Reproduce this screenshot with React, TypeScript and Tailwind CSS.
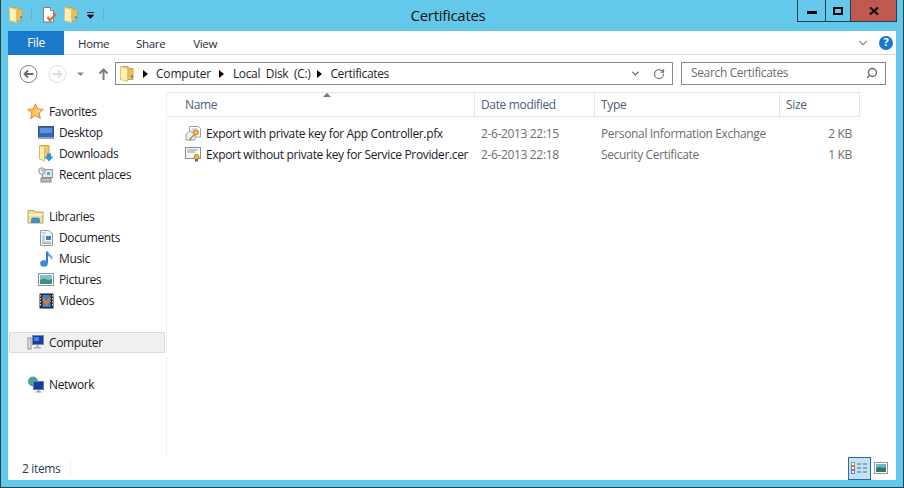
import React from 'react';
import { ChevronDown, RotateCw, Search } from 'lucide-react';

const FolderIcon = () => (
  <svg width="14" height="16" viewBox="0 0 14 16">
    <path d="M1 .5h7l1 2h4v11H1z" fill="#f0c65a" stroke="#c9a44a" />
    <path d="M.5 .5 7.500 2.500v13l-7-2z" fill="#fdf0b8" stroke="#e2c46c" />
    <path d="M8 3h3v9H8z" fill="#e9bb50" />
    <rect x="11" y="9" width="2" height="3" fill="#4a9bd8" />
  </svg>
);

const PageCheckIcon = () => (
  <svg width="16" height="16" viewBox="0 0 16 16">
    <path d="M1.500.500h7l3 3V15h-10z" fill="#fff" stroke="#7f7f7f" />
    <path d="M8.500.500v3h3" fill="#e6e6e6" stroke="#7f7f7f" />
    <path d="M5.500 10 8 13.500l6-7" fill="none" stroke="#e4673f" strokeWidth="2.200" />
  </svg>
);

const StarIcon = () => (
  <svg width="17" height="17" viewBox="0 0 17 17">
    <path d="M8.500 .8l2.300 5.100 5.500.5-4.200 3.600 1.300 5.600-4.900-3-4.900 3 1.300-5.600L.7 6.400l5.500-.5z" fill="#fbc15e" stroke="#e58a2c" />
    <path d="M8.500 3.500l1.500 3.500 3.500.4-3 2.300z" fill="#fde3a0" />
  </svg>
);

const DesktopIcon = () => (
  <svg width="16" height="14" viewBox="0 0 16 14">
    <rect x=".5" y=".5" width="15" height="11" fill="#2f68c4" stroke="#44546a" />
    <path d="M2 2h12v5H2z" fill="#5c93df" />
    <rect x="0" y="11" width="16" height="2" fill="#8fa0b4" />
  </svg>
);

const DownloadsIcon = () => (
  <svg width="15" height="17" viewBox="0 0 15 17">
    <path d="M1 .5h9v13H1z" fill="#f0c868" stroke="#c9a44a" />
    <path d="M.5 .5 5.500 2v14l-5-2z" fill="#fbeeb4" stroke="#d9b95f" />
    <path d="M8 8.500h4v3h2.500L10 16.500 5.500 11.500H8z" fill="#2f8fe0" />
  </svg>
);

const RecentIcon = () => (
  <svg width="16" height="16" viewBox="0 0 16 16">
    <rect x="4.500" y="2.500" width="10" height="8" fill="#dfe6ec" stroke="#8b98a3" />
    <rect x="9" y="5" width="3" height="3" fill="#64a6d8" />
    <circle cx="4" cy="4" r="3.200" fill="#f5f5f5" stroke="#8a8a8a" />
    <path d="M4 2v2h2" fill="none" stroke="#666" strokeWidth=".8" />
    <rect x="3" y="11" width="10" height="4" fill="#b6bec6" stroke="#7d8790" />
  </svg>
);

const LibrariesIcon = () => (
  <svg width="17" height="15" viewBox="0 0 17 15">
    <path d="M1 1.500h6l1 1.500h8v11H1z" fill="#f5de9a" stroke="#bda25a" />
    <path d="M1.500 5h14v1.500h-14z" fill="#fff7d8" />
    <path d="M4 14v-3q0-2.500 2-2.500h5q2 0 2 2.500v3z" fill="#3f8fc9" />
  </svg>
);

const DocumentsIcon = () => (
  <svg width="13" height="16" viewBox="0 0 13 16">
    <path d="M.5 .5h8l4 3v12h-12z" fill="#f8f9fb" stroke="#8d97a3" />
    <path d="M2 3h4M2 12h9M2 13.500h9" stroke="#9aa5b1" />
    <rect x="6" y="6" width="5" height="4" fill="#4a80b8" />
    <path d="M2 6h3M2 8h3M2 10h3" stroke="#9aa5b1" />
  </svg>
);

const MusicIcon = () => (
  <svg width="13" height="16" viewBox="0 0 13 16">
    <path d="M7 .5v11.500" stroke="#2f7fce" strokeWidth="2" />
    <ellipse cx="4" cy="12.500" rx="3.800" ry="3.200" fill="#3a8bd8" />
    <path d="M8 .5q1 3 4 4.500 1 2.500-.5 4.500.5-3-3.500-4.500z" fill="#5aa7e8" />
  </svg>
);

const PicturesIcon = () => (
  <svg width="16" height="14" viewBox="0 0 16 14">
    <rect x=".5" y=".5" width="15" height="12" fill="#fff" stroke="#8995a0" />
    <rect x="2" y="2" width="12" height="5" fill="#7cc0dc" />
    <path d="M2 7l4-1.500 4 1.500 4-1v5H2z" fill="#3f8f72" />
  </svg>
);

const VideosIcon = () => (
  <svg width="15" height="16" viewBox="0 0 15 16">
    <rect x=".5" y=".5" width="14" height="15" fill="#232b33" />
    <rect x="3.500" y="2" width="8" height="12" fill="#3f83c4" />
    <path d="M3.500 4 7.500 7l4-3v4l-4 5-4-5z" fill="#c87a50" />
    <path d="M1.500 2v12M13.500 2v12" stroke="#d8dde2" strokeDasharray="1.500 1.500" />
  </svg>
);

const ComputerIcon = () => (
  <svg width="17" height="15" viewBox="0 0 17 15">
    <rect x="1" y="3" width="3" height="11" fill="#e6e8e6" stroke="#8a9088" />
    <rect x="5.500" y=".5" width="11" height="9" fill="#123fa8" stroke="#7f8a96" />
    <path d="M7 2h5v4H7z" fill="#3a86e0" />
    <path d="M9.500 10h2v2h2.500v1.500H7V12h2.500z" fill="#a7afb8" />
  </svg>
);

const NetworkIcon = () => (
  <svg width="17" height="17" viewBox="0 0 17 17">
    <circle cx="6" cy="5.500" r="5" fill="#3fa0d8" />
    <path d="M3 2.500q3-.5 3 2T2 8zM7 1.500l3 2-2 2z" fill="#4fb04a" />
    <rect x="6.500" y="5.500" width="10" height="8" fill="#123fa8" stroke="#6f7b88" />
    <path d="M10.500 14h2v1.500h2v1h-6v-1h2z" fill="#8f99a3" />
  </svg>
);

const PfxIcon = () => (
  <svg width="17" height="17" viewBox="0 0 17 17">
    <path d="M4.500 1.500h9l2 2V12h-11z" fill="#fff" stroke="#98a3ad" />
    <path d="M6.500 4h6M6.500 6h3" stroke="#aab4bd" />
    <path d="M1 9l4-3 5 3v6H1z" fill="#eef1f4" stroke="#98a3ad" />
    <circle cx="11" cy="7.500" r="2.500" fill="#f3c04e" stroke="#b7862a" />
    <path d="M9.500 9.500 4.500 14.500l1.500 1" fill="none" stroke="#c9952f" strokeWidth="1.500" />
  </svg>
);

const CerIcon = () => (
  <svg width="17" height="17" viewBox="0 0 17 17">
    <rect x=".5" y="1.500" width="15" height="11" fill="#fbf8ea" stroke="#85909a" />
    <path d="M2.500 4h10M2.500 6h7" stroke="#6f9fc8" />
    <circle cx="11.500" cy="11" r="2.500" fill="#eeb93d" stroke="#b98a25" />
    <path d="M10 13v3l1.500-1 1.500 1v-3" fill="#2a6ec4" />
  </svg>
);

const Arrow = ({ className }: { className: string }) => (
  <span className={`h-0 w-0 border-y-[4px] border-l-[5px] border-y-transparent border-l-black ${className}`} />
);

const NavItem = ({ icon, label, child, selected }: { icon: React.ReactNode; label: string; child?: boolean; selected?: boolean }) => (
  <div className={`flex h-[21px] items-center border ${selected ? 'border-[#dcdcdc] bg-[#f0f0f0]' : 'border-transparent'}`}>
    <span className={`flex w-5 items-center justify-center ${child ? 'ml-[26px]' : 'ml-[15px]'}`}>{icon}</span>
    <span className={`${child ? 'ml-[3px]' : 'ml-[4px]'} text-[#1a1a2a]`}>{label}</span>
  </div>
);

const files = [
  { icon: <PfxIcon />, name: 'Export with private key for App Controller.pfx', date: '2-6-2013 22:15', type: 'Personal Information Exchange', size: '2 KB' },
  { icon: <CerIcon />, name: 'Export without private key for Service Provider.cer', date: '2-6-2013 22:18', type: 'Security Certificate', size: '1 KB' },
];

export default function App() {
  return (
    <div className="relative flex h-[488px] w-[904px] flex-col overflow-hidden border-x border-b border-[#2c3e48] bg-[#63c8ea] px-[7px] pb-[7px] font-['Open_Sans',sans-serif] text-[12px] tracking-[-0.35px] text-[#1e1e1e]">
      {/* Title bar */}
      <div className="flex h-[31px] shrink-0 items-start">
        <div className="flex items-center pt-[7px]">
          <span className="ml-px"><FolderIcon /></span>
          <span className="ml-[8px] mr-[10px] h-[12px] w-px bg-[#7fa6b6]" />
          <PageCheckIcon />
          <span className="ml-[6px]"><FolderIcon /></span>
          <svg className="ml-[8px]" width="9" height="9" viewBox="0 0 9 9">
            <path d="M1 1.500h7M1.500 4h6L4.500 7.500z" fill="#000" stroke="#000" strokeWidth=".8" />
          </svg>
          <span className="ml-[8px] h-[12px] w-px bg-[#7fa6b6]" />
        </div>
        <div className="flex-1 pt-[4px] pr-[5px] text-center text-[15px] tracking-[-0.3px] text-[#111]">Certificates</div>
        <div className="mr-[-1px] flex h-[22px] border border-t-0 border-[#1f3d4c]">
          <div className="flex w-[28px] items-center justify-center border-r border-[#1f3d4c]">
            <span className="mt-[3px] h-[3px] w-[10px] bg-black" />
          </div>
          <div className="flex w-[25px] items-center justify-center border-r border-[#1f3d4c]">
            <span className="h-[8px] w-[10px] border-2 border-black" />
          </div>
          <div className="flex w-[45px] items-center justify-center bg-[#c05a50]">
            <svg width="10" height="8" viewBox="0 0 10 8">
              <path d="M1 .5 9 7.500M9 .5 1 7.500" stroke="#000" strokeWidth="2" />
            </svg>
          </div>
        </div>
      </div>

      <div className="flex min-h-0 flex-1 flex-col bg-white">
        {/* Ribbon tabs */}
        <div className="flex h-[24px] shrink-0 items-center border-b border-[#dadbdc]">
          <div className="flex h-[24px] w-[56px] items-center justify-center bg-[#1979ca] text-white">File</div>
          <span className="ml-[14px] pt-[2px] text-[11.5px] text-[#2a2a3a]">Home</span>
          <span className="ml-[27px] pt-[2px] text-[11.5px] text-[#2a2a3a]">Share</span>
          <span className="ml-[28px] pt-[2px] text-[11.5px] text-[#2a2a3a]">View</span>
          <ChevronDown className="ml-auto text-[#8a8f96]" size={14} strokeWidth={2} />
          <span className="ml-[9px] mr-[3px] flex h-[14px] w-[14px] items-center justify-center rounded-full bg-[#1979ca] text-[11px] font-bold text-white">?</span>
        </div>

        {/* Address row */}
        <div className="flex h-[37px] shrink-0 items-center pl-[11px]">
          <svg width="92" height="20" viewBox="0 0 92 20" className="mr-[4px]">
            <circle cx="9.500" cy="10" r="8.500" fill="#fff" stroke="#7a7a7a" />
            <path d="M14.500 10h-9M9 6.500 5.500 10 9 13.500" fill="none" stroke="#6a6a6a" strokeWidth="1.800" />
            <circle cx="38.500" cy="10" r="8.500" fill="#fff" stroke="#dedede" />
            <path d="M33.500 10h9M39 6.500 42.500 10 39 13.500" fill="none" stroke="#dedede" strokeWidth="1.800" />
            <path d="M58 8.500h7l-3.500 3.500z" fill="#8a8a8a" />
            <path d="M84.500 16V6M80.500 9.500l4-4 4 4" fill="none" stroke="#7f7f7f" strokeWidth="2" />
          </svg>
          <div className="flex h-[23px] w-[558px] items-center border border-[#878787]">
            <span className="ml-[4px]"><FolderIcon /></span>
            <Arrow className="ml-[9px] mr-[8px]" />
            <span className="tracking-[-0.2px] text-[#1e1e2a]">Computer</span>
            <Arrow className="ml-[8px] mr-[9px]" />
            <span className="text-[#1e1e2a] [word-spacing:3px]">Local Disk (C:)</span>
            <Arrow className="ml-[7px] mr-[8px]" />
            <span className="text-[#1e1e2a]">Certificates</span>
            <ChevronDown className="ml-auto text-[#666]" size={11} strokeWidth={3} />
            <RotateCw className="ml-[12px] mr-[7px] text-[#777]" size={12} strokeWidth={2.500} />
          </div>
          <div className="ml-[8px] flex h-[23px] w-[205px] items-center border border-[#878787] pl-[9px] pr-[7px] pb-px text-[#6d6d6d]">
            Search Certificates
            <Search className="ml-auto -scale-x-100 text-[#6f6f6f]" size={12} strokeWidth={3} />
          </div>
        </div>

        <div className="flex min-h-0 flex-1">
          {/* Navigation pane */}
          <div className="w-[159px] shrink-0 border-r border-[#f0f0f0] pt-[9px] pl-px pr-px">
            <NavItem icon={<StarIcon />} label="Favorites" />
            <NavItem child icon={<DesktopIcon />} label="Desktop" />
            <NavItem child icon={<DownloadsIcon />} label="Downloads" />
            <NavItem child icon={<RecentIcon />} label="Recent places" />
            <div className="h-[21px]" />
            <NavItem icon={<LibrariesIcon />} label="Libraries" />
            <NavItem child icon={<DocumentsIcon />} label="Documents" />
            <NavItem child icon={<MusicIcon />} label="Music" />
            <NavItem child icon={<PicturesIcon />} label="Pictures" />
            <NavItem child icon={<VideosIcon />} label="Videos" />
            <div className="h-[21px]" />
            <NavItem selected icon={<ComputerIcon />} label="Computer" />
            <div className="h-[21px]" />
            <NavItem icon={<NetworkIcon />} label="Network" />
          </div>

          {/* File list */}
          <div className="flex-1 text-[#6d6d6d]">
            <div className="relative flex h-[25px] w-[693px] items-center border-y border-[#e5e5e5] text-[#4c607a]">
              <span className="absolute left-[156px] top-0 h-0 w-0 border-x-[4px] border-b-[4px] border-x-transparent border-b-[#6b7c8c]" />
              <span className="flex h-full w-[308px] items-center border-r border-[#e5e5e5] pl-[18px]">Name</span>
              <span className="flex h-full w-[120px] items-center border-r border-[#e5e5e5] pl-[6px]">Date modified</span>
              <span className="flex h-full w-[185px] items-center border-r border-[#e5e5e5] pl-[6px]">Type</span>
              <span className="flex h-full w-[80px] items-center border-r border-[#e5e5e5] pl-[6px]">Size</span>
            </div>
            <div className="pt-[6px]">
              {files.map((f) => (
                <div key={f.name} className="flex h-[21px] w-[693px] items-center">
                  <span className="flex w-[308px] items-center pl-[18px] text-[#1a1a2a]">
                    <span className="mr-[2px] w-[19px] shrink-0">{f.icon}</span>
                    <span className="whitespace-nowrap">{f.name}</span>
                  </span>
                  <span className="w-[120px] pl-[6px]">{f.date}</span>
                  <span className="w-[185px] pl-[6px]">{f.type}</span>
                  <span className="w-[72px] text-right">{f.size}</span>
                </div>
              ))}
            </div>
          </div>
        </div>

        {/* Status bar */}
        <div className="flex h-[24px] shrink-0 items-center pl-[14px] text-[#2a3a5a]">
          <span className="pt-px">2 items</span>
          <span className="ml-[10px] h-[18px] w-px bg-[#f0f0f0]" />
          <div className="ml-auto flex h-[23px] w-[23px] items-center justify-center self-end border border-[#2f6a94] bg-[#c4e2f5]">
            <svg width="17" height="13" viewBox="0 0 17 13">
              <rect x=".5" y=".5" width="3" height="3" fill="#fff" stroke="#6fae5a" />
              <rect x=".5" y="4.500" width="3" height="3" fill="#fff" stroke="#d8594a" />
              <rect x=".5" y="8.500" width="3" height="3" fill="#fff" stroke="#5a7ec8" />
              <path d="M6 2h4M12 2h4M6 6h4M12 6h4M6 10h4M12 10h4" stroke="#4a6a88" />
            </svg>
          </div>
          <div className="ml-[3px] mr-[8px]">
            <svg width="14" height="12" viewBox="0 0 14 12" className="block">
              <rect x=".5" y=".5" width="13" height="11" fill="#fff" stroke="#8f9aa5" />
              <rect x="2" y="2" width="10" height="4" fill="#6db4d4" />
              <path d="M2 6l3-1 4 1 3-1v5H2z" fill="#2f7a5e" />
            </svg>
          </div>
        </div>
      </div>
    </div>
  );
}
